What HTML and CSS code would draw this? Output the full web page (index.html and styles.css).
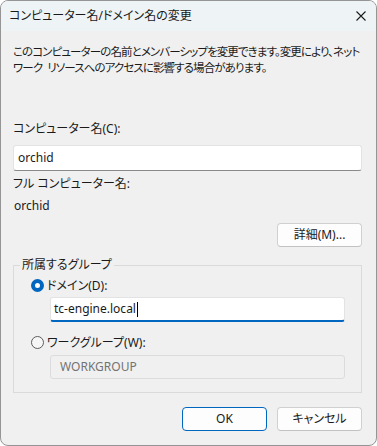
FILE: index.html
```html
<!DOCTYPE html>
<html lang="ja">
<head>
<meta charset="utf-8">
<title>コンピューター名/ドメイン名の変更</title>
<link rel="stylesheet" href="styles.css">
</head>
<body>
<div class="window">
  <div class="titlebar">
    <span class="title">コンピューター名/ドメイン名の変更</span>
    <svg class="close" width="10" height="10" viewBox="0 0 10 10" aria-hidden="true">
      <path d="M0.5 0.5 L9.5 9.5 M9.5 0.5 L0.5 9.5" stroke="#1b1b1b" stroke-width="1.1" fill="none"/>
    </svg>
  </div>
  <div class="content">
    <p class="desc">このコンピューターの名前とメンバーシップを変更できます。変更により、ネット<br>ワーク リソースへのアクセスに影響する場合があります。</p>
    <div class="lbl name-lbl">コンピューター名(C):</div>
    <div class="input name-input">orchid</div>
    <div class="lbl full-lbl">フル コンピューター名:</div>
    <div class="lbl full-val">orchid</div>
    <div class="btn-row"><button class="btn">詳細(M)...</button></div>
    <fieldset class="group">
      <legend>所属するグループ</legend>
      <div class="radio-row domain-row"><span class="radio checked"></span><span class="rlabel">ドメイン(D):</span></div>
      <div class="input sub-input focused">tc-engine.local<span class="caret"></span></div>
      <div class="radio-row work-row"><span class="radio"></span><span class="rlabel">ワークグループ(W):</span></div>
      <div class="input sub-input disabled">WORKGROUP</div>
    </fieldset>
    <div class="footer">
      <button class="btn ok">OK</button>
      <button class="btn">キャンセル</button>
    </div>
  </div>
</div>
</body>
</html>
```
FILE: styles.css
```css
* { box-sizing: border-box; }
html, body { margin: 0; padding: 0; background: #ffffff; }
body {
  font-family: "Noto Sans", "Noto Sans CJK JP", sans-serif;
  font-size: 12px;
  color: #1a1a1a;
  font-feature-settings: "palt";
}
.window {
  width: 377px;
  height: 446px;
  border: 1px solid #959595;
  border-radius: 8px;
  background: #f0f0f0;
  overflow: hidden;
  display: flex;
  flex-direction: column;
}
.titlebar {
  height: 30px;
  background: #eef4f5;
  display: flex;
  align-items: center;
  justify-content: space-between;
  padding: 0 10px 0 8px;
  flex-shrink: 0;
}
.title { font-size: 12px; line-height: 16px; }
.close { display: block; margin-right: 0; }
.content {
  padding: 0 14px 0 12px;
  display: flex;
  flex-direction: column;
}
.desc {
  margin: 13px 0 0 0;
  line-height: 16px;
  white-space: nowrap;
  font-size: 11.5px;
  letter-spacing: -0.9px;
  word-spacing: 3px;
}
.lbl { line-height: 16px; }
.name-lbl { margin-top: 45px; }
.input {
  background: #ffffff;
  border: 1px solid #e3e3e3;
  border-bottom: 1px solid #8a8a8a;
  border-radius: 3px;
  display: flex;
  align-items: center;
  padding-left: 4px;
  line-height: 16px;
}
.name-input { margin-top: 8px; height: 26px; }
.full-lbl { margin-top: 5px; }
.full-val { margin-top: 6px; padding-left: 1px; }
.btn-row { margin-top: 9px; display: flex; justify-content: flex-end; }
.btn {
  width: 85px;
  height: 24px;
  background: #fdfdfd;
  border: 1px solid #d0d0d0;
  border-bottom-color: #c2c2c2;
  border-radius: 4px;
  font: inherit;
  color: #1a1a1a;
  padding: 0;
  line-height: 16px;
}
.btn.ok { border: 1px solid #0067c0; }
.group {
  margin: 10px 0 0 0;
  padding: 0 0 13px 6px;
  border: 1px solid #dadada;
  min-width: 0;
}
.group legend {
  padding: 0 2px;
  line-height: 16px;
  font-size: 12px;
}
.radio-row {
  display: flex;
  align-items: center;
  height: 16px;
  margin-left: 11px;
}
.domain-row { margin-top: 4px; }
.work-row { margin-top: 12px; }
.radio {
  width: 13px;
  height: 13px;
  border-radius: 50%;
  border: 1px solid #5c5c5c;
  background: #f6f6f6;
  flex-shrink: 0;
  margin-right: 3px;
}
.radio.checked {
  border: 4px solid #0067c0;
  background: #ffffff;
}
.sub-input { margin-left: 30px; width: 295px; }
.focused {
  margin-top: 4px;
  height: 25px;
  border-bottom: 2px solid #0067c0;
  padding-left: 3px;
}
.caret {
  display: inline-block;
  width: 1px;
  height: 15px;
  background: #000;
  margin-left: 1px;
}
.disabled {
  margin-top: 5px;
  height: 24px;
  background: #f0f0f0;
  border: 1px solid #dcdcdc;
  color: #737373;
  padding-left: 9px;
}
.footer {
  margin-top: 14px;
  display: flex;
  justify-content: flex-end;
  gap: 10px;
}
```
